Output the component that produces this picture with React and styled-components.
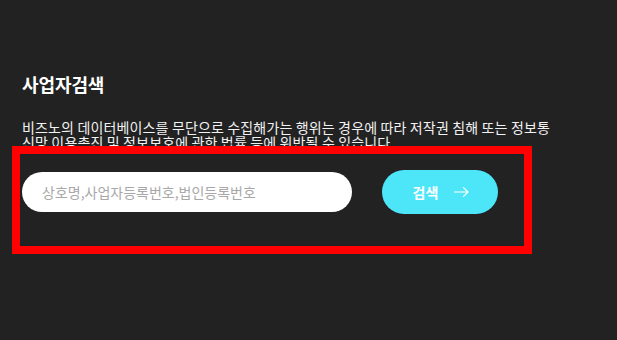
import styled, { createGlobalStyle } from 'styled-components';

const GlobalStyle = createGlobalStyle`
  html, body {
    margin: 0;
    padding: 0;
    background: #222222;
  }
  body {
    font-family: 'Noto Sans CJK KR', 'Noto Sans', sans-serif;
    color: #ffffff;
  }
  * {
    box-sizing: border-box;
  }
`;

const Section = styled.section`
  width: 617px;
  height: 340px;
  padding: 67px 20px 0;
  background: #222222;
`;

const Title = styled.h2`
  margin: 0 0 0 2px;
  font-size: 18px;
  font-weight: 700;
  line-height: 34px;
  letter-spacing: -0.1px;
`;

const Notice = styled.p`
  margin: 19px 0 0 2px;
  width: 535px;
  font-size: 14px;
  line-height: 15px;
  letter-spacing: 0.15px;
  color: #f2f2f2;
`;

const SearchForm = styled.form`
  display: flex;
  align-items: center;
  gap: 30px;
  width: 504px;
  margin-top: 4px;
  padding: 16px 0 32px 2px;
  outline: 8px solid #ff0000;
`;

const SearchInput = styled.input`
  width: 330px;
  height: 40px;
  border: none;
  border-radius: 20px;
  padding: 0 20px;
  background: #ffffff;
  font-family: inherit;
  font-size: 14px;
  color: #333;
  outline: none;
  &::placeholder {
    color: #a8a8a8;
  }
`;

const SearchButton = styled.button`
  display: flex;
  align-items: center;
  justify-content: center;
  gap: 16px;
  width: 116px;
  height: 44px;
  border: none;
  border-radius: 22px;
  background: #4de6f9;
  color: #ffffff;
  font-family: inherit;
  font-size: 14px;
  font-weight: 700;
  cursor: pointer;
  padding: 0 0 0 2px;
`;

const Arrow = () => (
  <svg width="15" height="10" viewBox="0 0 15 10" fill="none">
    <path
      d="M0.5 5H14M9.5 0.6L14 5L9.5 9.4"
      stroke="#ffffff"
      strokeWidth="1.2"
      strokeLinecap="round"
      strokeLinejoin="round"
    />
  </svg>
);

const App = () => {
  return (
    <>
      <GlobalStyle />
      <Section>
        <Title>사업자검색</Title>
        <Notice>
          비즈노의 데이터베이스를 무단으로 수집해가는 행위는 경우에 따라 저작권 침해 또는 정보통신망 이용촉진 및 정보보호에 관한 법률 등에 위반될 수 있습니다.
        </Notice>
        <SearchForm onSubmit={(e) => e.preventDefault()}>
          <SearchInput type='text' placeholder='상호명,사업자등록번호,법인등록번호' />
          <SearchButton type='submit'>
            검색
            <Arrow />
          </SearchButton>
        </SearchForm>
      </Section>
    </>
  );
};

export default App;
